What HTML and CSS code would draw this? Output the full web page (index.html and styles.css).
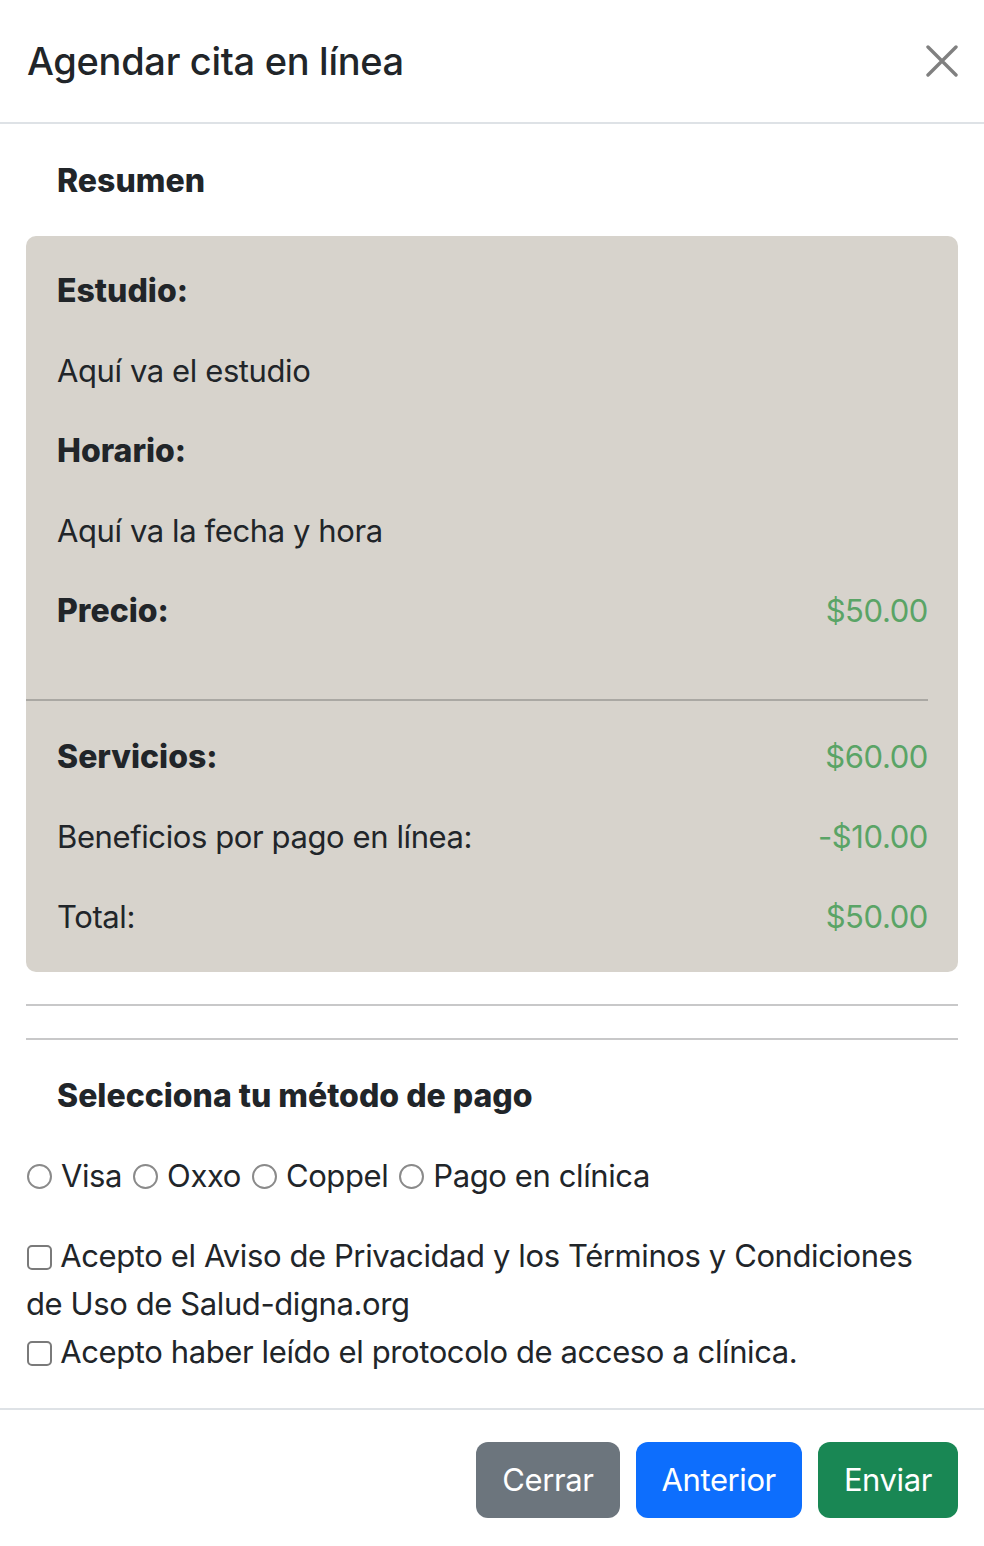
FILE: index.html
```html
<!DOCTYPE html>
<html lang="es">
<head>
<meta charset="utf-8">
<title>Agendar cita en línea</title>
<link rel="stylesheet" href="styles.css">
</head>
<body>
<div class="modal">
  <header class="modal-header">
    <h5 class="modal-title">Agendar cita en línea</h5>
    <button class="btn-close" type="button" aria-label="Cerrar">
      <svg width="32" height="32" viewBox="0 0 32 32"><path d="M2 2 L30 30 M30 2 L2 30" stroke="#808080" stroke-width="3.4" stroke-linecap="round" fill="none"/></svg>
    </button>
  </header>
  <main class="modal-body">
    <h6 class="section-title">Resumen</h6>
    <div class="summary">
      <p class="row"><strong>Estudio:</strong></p>
      <p class="row">Aquí va el estudio</p>
      <p class="row"><strong>Horario:</strong></p>
      <p class="row">Aquí va la fecha y hora</p>
      <p class="row"><strong>Precio:</strong><span class="money">$50.00</span></p>
      <hr class="summary-rule">
      <p class="row"><strong>Servicios:</strong><span class="money">$60.00</span></p>
      <p class="row">Beneficios por pago en línea:<span class="money">-$10.00</span></p>
      <p class="row last">Total:<span class="money">$50.00</span></p>
    </div>
    <hr class="rule">
    <hr class="rule">
    <h6 class="section-title pay">Selecciona tu método de pago</h6>
    <div class="methods">
      <label class="opt"><input type="radio" name="pago" class="radio"> Visa</label>
      <label class="opt"><input type="radio" name="pago" class="radio"> Oxxo</label>
      <label class="opt"><input type="radio" name="pago" class="radio"> Coppel</label>
      <label class="opt"><input type="radio" name="pago" class="radio"> Pago en clínica</label>
    </div>
    <div class="terms">
      <label class="check"><input type="checkbox" class="box"> Acepto el Aviso de Privacidad y los Términos y Condiciones de Uso de Salud-digna.org</label>
      <label class="check"><input type="checkbox" class="box"> Acepto haber leído el protocolo de acceso a clínica.</label>
    </div>
  </main>
  <footer class="modal-footer">
    <button class="btn btn-secondary" type="button">Cerrar</button>
    <button class="btn btn-primary" type="button">Anterior</button>
    <button class="btn btn-success" type="button">Enviar</button>
  </footer>
</div>
</body>
</html>
```

FILE: styles.css
```css
* { box-sizing: border-box; }
html, body { margin: 0; padding: 0; background: #fff; }
body {
  font-family: Inter, "Noto Sans", "Liberation Sans", sans-serif;
  font-size: 31px;
  line-height: 48px;
  letter-spacing: -0.4px;
  color: #212529;
}
.modal { width: 984px; }
.modal-header {
  display: flex;
  align-items: center;
  justify-content: space-between;
  padding: 32px 26px 32px 27px;
  border-bottom: 2px solid #dee2e6;
}
.modal-title {
  margin: 0;
  font-size: 38px;
  line-height: 58px;
  font-weight: 500;
  letter-spacing: -0.3px;
}
.btn-close {
  border: 0;
  background: none;
  padding: 0;
  width: 32px;
  height: 32px;
  display: block;
}
.btn-close svg { display: block; }
.modal-body { padding: 33px 26px 32px 26px; }
.section-title {
  margin: 0 0 31px 0;
  padding-left: 31px;
  font-size: 32px;
  line-height: 48px;
  font-weight: 800;
  letter-spacing: 0;
}
.summary {
  background: #d7d3cc;
  border-radius: 10px;
  padding: 31px 30px 31px 31px;
}
.row {
  margin: 0 0 32px 0;
  display: flex;
  justify-content: space-between;
}
.row.last { margin-bottom: 0; }
.row strong { font-weight: 800; font-size: 32px; letter-spacing: 0; }
.money { color: #5aa466; }
.summary-rule {
  margin: 64px 0 32px -31px;
  border: 0;
  border-top: 2px solid #aaa8a3;
  height: 0;
}
.rule {
  margin: 32px 0;
  border: 0;
  border-top: 2px solid #c8c8c9;
  height: 0;
}
.section-title.pay { margin-bottom: 32px; }
.methods {
  display: flex;
  align-items: center;
  gap: 10px;
  margin-bottom: 32px;
}
.opt { display: inline-flex; align-items: center; gap: 9px; }
.radio {
  appearance: none;
  -webkit-appearance: none;
  margin: 0 0 0 1px;
  width: 25px;
  height: 25px;
  border: 2px solid #8a8a8a;
  border-radius: 50%;
  background: #fff;
  flex: none;
}
.terms { display: flex; flex-direction: column; padding-right: 30px; }
.check { display: block; }
.box {
  appearance: none;
  -webkit-appearance: none;
  margin: 0 0 0 1px;
  width: 25px;
  height: 25px;
  border: 2px solid #7a7a7a;
  border-radius: 5px;
  background: #fff;
  vertical-align: -3px;
}
.modal-footer {
  display: flex;
  justify-content: flex-end;
  gap: 16px;
  padding: 32px 26px 29px 26px;
  border-top: 2px solid #dee2e6;
}
.btn {
  font-family: inherit;
  font-size: 31px;
  letter-spacing: -0.4px;
  line-height: 48px;
  padding: 12px 24px;
  border: 2px solid transparent;
  border-radius: 12px;
  color: #fff;
  font-weight: 400;
}
.btn-secondary { background: #6c757d; }
.btn-primary { background: #0d6efd; }
.btn-success { background: #198754; }
```
